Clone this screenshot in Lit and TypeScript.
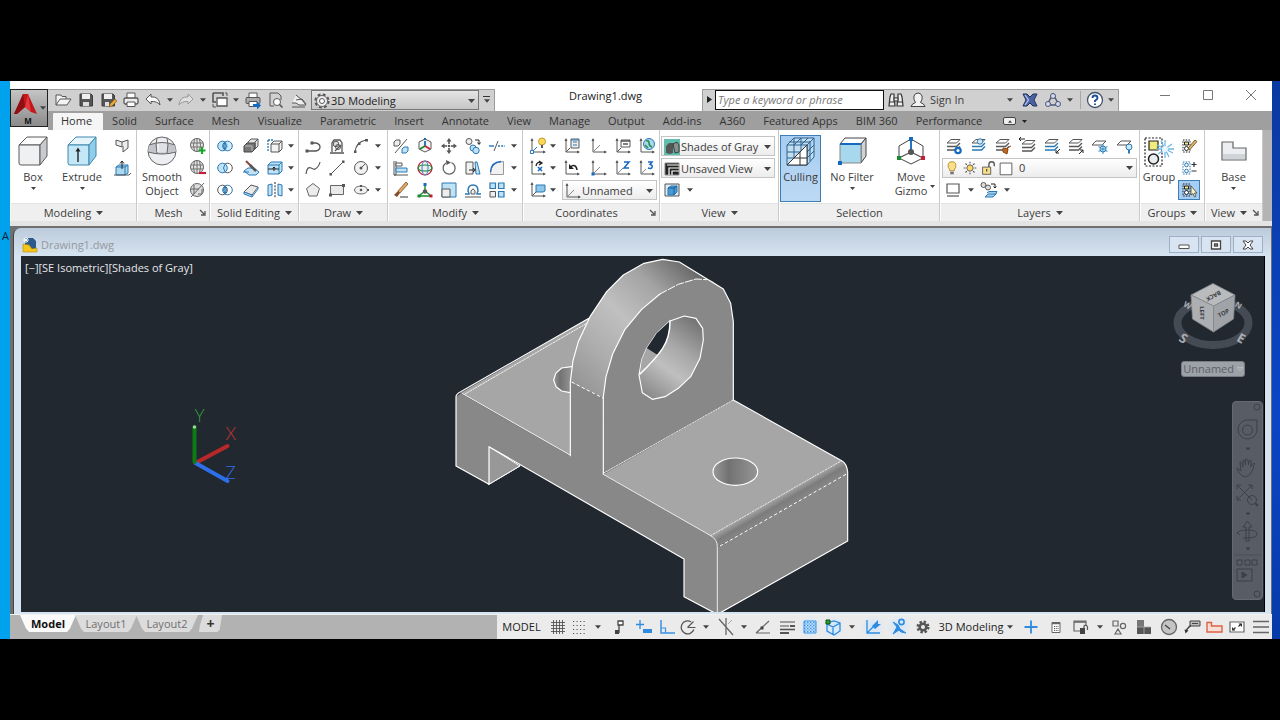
import { LitElement, html, svg, css } from "lit";
import { customElement } from "lit/decorators.js";

const K = "#565656";
const B = "#2a78b4";
const L = "#bfe3f5";

const axes = svg`<path d="M4 3v13h13" stroke=${K} fill="none"/><path d="M2.500 5L4 2l1.500 3zM15 14.500l3 1.500-3 1.500z" fill=${K}/>`;
const cubeBody = (top: string, front: string, side: string, edge: string) => svg`
  <g stroke=${edge} stroke-linejoin="round"><path d="M2 10l8-8h20l-7 8z" fill=${top}/><path d="M2 10h21v20H4q-2 0-2-2z" fill=${front}/><path d="M23 10l7-8v19l-7 9z" fill=${side}/></g>`;
const sheets = (c: string) => svg`<path d="M3 7l4-3.500h9L12.500 7z" fill="#fff" stroke=${K}/><path d="M3 10.500h9.500L16 7M3 14h9.500L16 10.500" fill="none" stroke=${c} stroke-width="1.400"/>`;
const globe = svg`<circle cx="9" cy="9" r="6.500" fill="#e4e4e4" stroke="#666"/><path d="M3 7h12M3 11h12M9 2.500v13M6.500 3q-2 6 0 12M11.500 3q2 6 0 12" fill="none" stroke="#666" stroke-width=".9"/>`;

const small: Record<string, unknown> = {
  open: svg`<path d="M3 15V5h5l1 1.500h4V9M3 15l4-6h11l-4 6z" fill="#f4f4f4" stroke=${K}/>`,
  save: svg`<path d="M4 4h11l1.500 1.500V16H4z" fill="#555" stroke="#3c3c3c"/><path d="M6 4h8v5H6z" fill="#eee"/><path d="M7 12h6v4H7z" fill="#ddd"/>`,
  saveas: svg`<path d="M3 4h11l1.500 1.500V16H3z" fill="#555" stroke="#3c3c3c"/><path d="M5 4h8v5H5z" fill="#eee"/><path d="M6 12h4v4H6z" fill="#ddd"/><path d="M10 17l1-3 5-5 2 2-5 5z" fill="#e8a53a" stroke="#8a5a18" stroke-width=".7"/>`,
  print: svg`<path d="M6 8V3h8v5" fill="#fff" stroke=${K}/><rect x="3" y="8" width="14" height="6" rx="1.500" fill="#ececec" stroke=${K} stroke-width="1.300"/><path d="M6 12h8v4.500H6z" fill="#fff" stroke=${K}/>`,
  plot: svg`<path d="M6 8V3h8v5" fill="#fff" stroke=${K}/><rect x="3" y="7.500" width="14" height="6" rx="1" fill="#aaa" stroke=${K}/><path d="M6 11.500h8v5H6z" fill="#fff" stroke=${K}/><path d="M10 14h4v-2.500l4 4-4 4V17h-4z" fill="#1769c0"/>`,
  undo: svg`<path d="M3 9l5-5v3q8-1 9 8-3-4-9-3.500V14z" fill="#fafafa" stroke=${K} stroke-linejoin="round"/>`,
  redo: svg`<path d="M17 9l-5-5v3q-8-1-9 8 3-4 9-3.500V14z" fill="#e0e0e0" stroke="#999" stroke-linejoin="round"/>`,
  sheetset: svg`<path d="M3 3h10v3M3 3v9h3" fill="none" stroke=${K} stroke-width="1.600"/><path d="M7 8h10v8H7z" fill="#fff" stroke=${K} stroke-width="1.300"/><path d="M3 14v3h3M15 3h2v3" stroke=${K} fill="none"/>`,
  preview: svg`<path d="M4 3h8l3 3v4M4 3v13h4" fill="none" stroke=${K}/><circle cx="11" cy="12" r="3.500" fill="#fff" stroke=${K}/><path d="M13.500 14.500l3 3" stroke=${K} stroke-width="1.600"/>`,
  publish: svg`<path d="M3 13h4l3 2h7l-4-5-6-5" fill="#eee" stroke=${K}/><path d="M7 10l6-1 4 5" fill="none" stroke=${K}/><path d="M3 17h13" stroke=${K}/>`,
  gear: svg`<circle cx="10" cy="10" r="6.500" fill="none" stroke="#555" stroke-width="2.200" stroke-dasharray="2.800 2.300"/><circle cx="10" cy="10" r="5.500" fill="#eee" stroke="#666"/><circle cx="10" cy="10" r="2.500" fill="#fff" stroke="#555"/>`,
  wedge: svg`<path d="M4 4l6 2v5l-6-2zM10 6l6-2v8l-5 4V10" fill="#ececec" stroke=${K}/>`,
  presspull: svg`<path d="M4 9l3-2h9v8l-3 2H4z" fill="#a9d8ef" stroke=${B}/><path d="M4 9h9v8M13 9l3-2" stroke=${B} fill="none"/><path d="M10 11V3M8 5.500L10 3l2 2.500" stroke="#222" fill="none"/><path d="M2 17h15l2-2" stroke=${K} fill="none"/>`,
  meshadd: svg`${globe}<path d="M14 11v7M10.500 14.500h7" stroke="#19a52c" stroke-width="2.200"/>`,
  meshsub: svg`${globe}<path d="M11 15h7" stroke="#c32038" stroke-width="2.200"/>`,
  meshcrease: svg`<circle cx="9" cy="10" r="6.500" fill="#ddd" stroke="#666"/><path d="M3 17L16 3M6 5v9M3 9h8M10 14h4v-5" stroke="#666" fill="none"/>`,
  union: svg`<circle cx="7.500" cy="10" r="4.800" fill=${L} stroke=${B}/><circle cx="12.500" cy="10" r="4.800" fill=${L} fill-opacity=".7" stroke=${B}/><path d="M10 6.200q3 3.800 0 7.600-3-3.800 0-7.600" fill="#6fb3dd" stroke=${B}/>`,
  subtract: svg`<circle cx="12.500" cy="10" r="4.800" fill="#fff" stroke=${K}/><circle cx="7.500" cy="10" r="4.800" fill=${L} stroke=${B}/><path d="M10 6.200q-3 3.800 0 7.600" fill="none" stroke=${B}/>`,
  intersect: svg`<circle cx="7.500" cy="10" r="4.800" fill="#fff" stroke=${K}/><circle cx="12.500" cy="10" r="4.800" fill="none" stroke=${B}/><path d="M10 6.200q3 3.800 0 7.600-3-3.800 0-7.600" fill="#6fb3dd" stroke=${B}/>`,
  thicken: svg`<path d="M7 6l3-3h7v7l-3 3H7z" fill="#e4e4e4" stroke=${K}/><path d="M14 6v7M14 6l3-3" stroke=${K}/><path d="M3 10l3-3h8v6l-3 3H3z" fill="#777" stroke="#444"/><path d="M4 10h7v5" stroke="#bbb" fill="none"/>`,
  slice: svg`<path d="M3 13l4-3h6l5 4-3 3H8z" fill=${L} stroke=${B}/><path d="M5 3l5 5" stroke="#8a4a3a" stroke-width="2"/><path d="M9 7l6 6" stroke="#555" stroke-width="2.500"/><path d="M2 14h6" stroke=${B}/>`,
  thick2: svg`<path d="M3 12l7-7 7 2-6 8z" fill="#e9e9e9" stroke=${K}/><path d="M3 12v2l8 3V15M11 17l6-8V7" fill=${L} stroke=${B}/><path d="M3 12l8 3" stroke=${B}/>`,
  interfere: svg`<path d="M6 8l3-3h8v8l-3 3H6zM6 8h8v8M14 8l3-3" fill="#f2f2f2" stroke=${K}/><path d="M3 4v12M3 4h5" stroke=${B} stroke-width="1.300" stroke-dasharray="2 1"/>`,
  extractf: svg`<path d="M3 7l3-3h11v9l-3 3H3zM3 7h11v9M14 7l3-3" fill=${L} stroke=${B}/><path d="M3 11h11M9 13V9M7.500 10.500L9 9l1.500 1.500" stroke="#222" fill="none"/>`,
  separate: svg`<path d="M3 5l4-1v11l-4 1zM17 5l-4-1v11l4 1z" fill=${L} stroke=${B}/><path d="M10 2v16" stroke="#222" stroke-dasharray="2 1.300"/>`,
  polyline: svg`<path d="M4 15h9q4-1 4-4t-4-4H9" fill="none" stroke=${K} stroke-width="1.300"/><path d="M2.500 13.500h3v3h-3zM7.500 5.500h3v3h-3z" fill=${K}/>`,
  polysolid: svg`<path d="M3 17h14M5 16V7l2-3h6l2 3v9M8 15l6-6" fill="none" stroke=${K} stroke-width="1.300"/><circle cx="9" cy="8" r="2.800" fill="#ddd" stroke=${K}/><circle cx="11" cy="11" r="2.500" fill="none" stroke=${K}/>`,
  arc: svg`<path d="M4 16Q5 6 15 4" fill="none" stroke=${K} stroke-width="1.200"/><path d="M3 14.500h2.500V17H3zM7 6.500h2.500V9H7zM14 3h3v2.500h-3z" fill=${K}/>`,
  spline: svg`<path d="M3 16q1-8 5-6t4 1q4-2 5-7" fill="none" stroke=${K} stroke-width="1.200"/>`,
  line: svg`<path d="M4 16L16 4" stroke=${K}/><path d="M2.500 15H5v2.500H2.500zM15 2.500h2.500V5H15z" fill=${K}/>`,
  circle: svg`<circle cx="10" cy="10" r="6.500" fill="#f1f1f1" stroke=${K}/><circle cx="10" cy="10" r="1.500" fill=${K}/><path d="M10 10l4-4" stroke=${K}/>`,
  polygon: svg`<path d="M10 3.500l6.500 5-2.500 7.500H6L3.500 8.500z" fill="#ececec" stroke="#666"/>`,
  rect: svg`<path d="M3.500 5.500h13v9h-13z" fill="#e9e9e9" stroke="#666"/><path d="M2 13.500h3v3H2zM15 4h3v3h-3z" fill=${K}/>`,
  ellipse: svg`<ellipse cx="10" cy="10" rx="6.500" ry="4" fill="#f1f1f1" stroke="#666"/><circle cx="10" cy="10" r="1.300" fill=${K}/><path d="M16 10h2M10 5v2" stroke=${K} stroke-width="2"/>`,
  align3: svg`<path d="M3 6l2-2h4v4L7 10H3z" fill="#eee" stroke=${K}/><path d="M11 13l2-2h4v4l-2 2h-4z" fill=${L} stroke=${B}/><path d="M4 17L16 3" stroke=${K}/>`,
  move3: svg`<path d="M10 3l6 3v7l-6 3-6-3V6z" fill="#f4f4f4" stroke=${K}/><path d="M10 10V5" stroke="#1769c0" stroke-width="1.800"/><path d="M10 10l-5 3" stroke="#168a2c" stroke-width="1.800"/><path d="M10 10l5 3" stroke="#c32038" stroke-width="1.800"/><path d="M9 2h2v2H9z" fill="#1769c0"/>`,
  move: svg`<path d="M10 4v4M10 12v4M4 10h4M12 10h4" stroke=${K} stroke-width="1.600"/><path d="M7.500 5.500L10 2l2.500 3.500zM7.500 14.500L10 18l2.500-3.500zM5.500 7.500L2 10l3.500 2.500zM14.500 7.500L18 10l-3.500 2.500z" fill=${K}/><circle cx="10" cy="10" r="1.300" fill=${K}/>`,
  copy: svg`<circle cx="6" cy="5.500" r="3" fill="#eee" stroke=${K}/><circle cx="10" cy="12" r="3" fill=${L} stroke=${B}/><circle cx="13" cy="14.500" r="3.200" fill=${L} stroke=${B}/><path d="M12 4h4v4M14.500 6.500L16 8.500l1.500-2" fill="none" stroke="#222"/>`,
  trim: svg`<path d="M2 10h5" stroke="#1769c0" stroke-width="1.300"/><path d="M11 10h7" stroke=${B} stroke-dasharray="2 1.200" stroke-width="1.300"/><path d="M7 15l4-10" stroke=${K}/>`,
  align: svg`<path d="M3 3v14h2V3M3 17h14" fill="none" stroke=${K}/><path d="M5 5h6v3H5z" fill="#fff" stroke=${K}/><path d="M5 10h11v4H5z" fill=${L} stroke=${B}/>`,
  rotate3: svg`<circle cx="10" cy="10" r="7" fill="#eee" stroke="#c32038" stroke-width="1.200"/><ellipse cx="10" cy="10" rx="7" ry="3" fill="none" stroke="#168a2c" stroke-width="1.100"/><ellipse cx="10" cy="10" rx="3" ry="7" fill="none" stroke="#4a86c0" stroke-width="1.100"/>`,
  rotate: svg`<path d="M7 5A6 6 0 1 0 12.500 4.600" fill="none" stroke="#666" stroke-width="1.300"/><path d="M7 2l5 2.500L7.500 7z" fill=${K}/>`,
  mirror: svg`<path d="M3 4h7v12H3z" fill="#f1f1f1" stroke=${K}/><path d="M12 4h2l3 12h-4z" fill=${L} stroke=${B}/><path d="M6 12h6M10 10l2.500 2-2.500 2" fill="none" stroke="#222"/>`,
  fillet: svg`<path d="M3.500 16.500Q3 4 16.500 3.500v13z" fill="#f1f1f1" stroke="#999"/><path d="M3.500 14Q4 4 14 3.500" fill="none" stroke="#1769c0" stroke-width="1.300"/>`,
  erase: svg`<path d="M7 11l8-9 2 2-8 9z" fill="#e0a868" stroke="#7a5022" stroke-width=".8"/><path d="M3 15l4-4 2 2-3 4z" fill="#8a4a28"/><path d="M9 17h8" stroke="#333"/>`,
  scale3: svg`<path d="M10 5v6M10 11l-5 4M10 11l5 4M4 16h12" stroke="#168a2c" stroke-width="1.400" fill="none"/><circle cx="10" cy="11.500" r="2.200" fill=${K}/><path d="M8.500 3h3v3h-3z" fill="#1769c0"/><path d="M2.500 14.500h3v3h-3z" fill="#168a2c"/><path d="M14.500 14.500h3v3h-3z" fill="#c32038"/>`,
  scale: svg`<path d="M3 3h14v14H3z" fill=${L} stroke=${B}/><path d="M3 9h8v8H3z" fill="#eee" stroke=${K}/>`,
  offset: svg`<path d="M2 14h4q0-1-1-3 0-6 5-6t5 6q-1 2-1 3h4" fill="none" stroke=${B} stroke-width="1.500"/><path d="M2 17h16M8 14V11q2-4 4 0v3z" stroke=${K} fill="#eee"/>`,
  array: svg`<g fill=${L} stroke=${B} stroke-width="1.200"><path d="M3 3h5.500v5.500H3zM11.500 3H17v5.500h-5.500zM11.500 11.500H17V17h-5.500z"/></g><path d="M3 11.500h5.500V17H3z" fill="#eee" stroke=${K}/>`,
  ucsidea: svg`${axes}<path d="M4 16l5-5" stroke=${B}/><circle cx="14" cy="5.500" r="3.500" fill="#fbd75b" stroke="#c7952b"/><path d="M13 9h2v3h-2z" fill=${K}/><path d="M2.500 14.500h3v3h-3z" fill="#fff" stroke=${B}/>`,
  ucsx: svg`${axes}<path d="M8 8q1-5 5-3M11 3l3 2-3 2" fill="none" stroke="#222" stroke-width="1.300"/><path d="M10 9l4 4M14 9l-4 4" stroke="#1769c0" stroke-width="1.600"/>`,
  ucsview: svg`${axes}<path d="M8 5h9v6l-2 1H8z" fill="#8fc7ea" stroke=${B}/><path d="M4 16l4-4" stroke=${K}/>`,
  ucsnamed: svg`${axes}<path d="M9 3h8v9H9z" fill="#eee" stroke=${K}/><path d="M11 6h4M11 9h4M9 4h8" stroke=${B} stroke-width="1.200"/><path d="M4 16l4-4" stroke=${K}/>`,
  ucsworld: svg`${axes}<path d="M4 16l7-7" stroke="#888"/>`,
  ucslist: svg`${axes}<path d="M8 4h9v7H8z" fill="#fff" stroke=${K}/><path d="M8 5h9M10 8h5" stroke=${K} stroke-width="1.600"/><path d="M4 16l4-4" stroke=${K}/>`,
  ucsglobe: svg`${axes}<circle cx="12" cy="8" r="5.500" fill="#a7d9ea" stroke=${B}/><path d="M9 5q3-1 3 2t3 4M8 9l3 3" stroke="#2f8a58" stroke-width="1.600" fill="none"/>`,
  ucsprev: svg`${axes}<path d="M8 9q6-4 7 3" fill="none" stroke="#222" stroke-width="1.500"/><path d="M7 6v5h5z" fill="#222"/>`,
  ucsorigin: svg`${axes}<path d="M4 16l7-7" stroke="#888"/><path d="M2.500 14.500h3v3h-3z" fill="#1769c0"/>`,
  ucsz: svg`${axes}<path d="M4 16l6-6" stroke="#888"/><path d="M11 4h5l-5 6h5" fill="none" stroke="#1769c0" stroke-width="1.500"/>`,
  ucs3: svg`${axes}<path d="M4 16l5-5" stroke="#888"/><path d="M11 4h4l-2 2.500q3 .5 2 3-1 1.500-4 .5" fill="none" stroke="#1769c0" stroke-width="1.500"/>`,
  shades: svg`<path d="M2 2h16v16H2z" fill="#5fbfae"/><path d="M4 9l3-3h4v10l-3 1-4-1z" fill="#555"/><path d="M11 7l4-2 2 3v7l-4 1z" fill="#8a8f8e" stroke="#3c3c3c"/>`,
  unsaved: svg`<path d="M3 4h14v12H3z" fill="#222" stroke="#888"/><path d="M7 16V9h10M10 16v-4h7M5 6h12" stroke="#fff" fill="none" stroke-width="1.200"/>`,
  viewbox: svg`<path d="M3 4h14v12H3z" fill="#dcebf6" stroke="#555"/><path d="M6 8l3-2h6v6l-3 3H6z" fill="#4a9ad4" stroke=${B}/><path d="M6 8h6v7M12 8l3-2" stroke="#1c5f96" fill="none"/>`,
  lprops: svg`${sheets(K)}<circle cx="14" cy="14.500" r="2.700" fill="#fff" stroke="#1769c0" stroke-width="2.200"/>`,
  lcur: svg`<g>${sheets(B)}</g><circle cx="11" cy="5.500" r="2.700" fill="#d5e9f5" stroke=${B}/>`,
  lmatch: svg`${sheets(K)}<path d="M10 12l5 1-1 5-4-2zM14 12l4-2" fill="#c0691f" stroke="#8a4a18"/>`,
  lprev: svg`<g transform="translate(2 1)">${sheets(K)}</g><path d="M8 3H2M4 1L2 3l2 2" stroke="#222" fill="none"/>`,
  liso: svg`${sheets(B)}<path d="M18 13l-4 4M14 14v3h3" stroke="#222" fill="none"/>`,
  luniso: svg`${sheets(K)}<path d="M13 18l4-4M14 14h3v3" stroke="#222" fill="none"/>`,
  lfreeze: svg`<path d="M2 9l4-4h10l-4 4z" fill="#fff" stroke=${K}/><path d="M13 8v10M8.500 10.500l9 5M17.500 10.500l-9 5" stroke="#4f9fce" stroke-width="1.100"/><circle cx="13" cy="13" r="3" fill="none" stroke=${B}/>`,
  loff: svg`<path d="M2 9l4-4h10l-4 4z" fill="#fff" stroke=${K}/><circle cx="14" cy="11" r="3" fill="#cfe6f4" stroke=${B}/><path d="M13 14h2v3.500h-2z" fill=${B}/>`,
  bulb: svg`<path d="M7.500 13q0-2-1.500-3.500Q4.500 3 10 3t4 6.500Q12.500 11 12.500 13z" fill="#fbe08a" stroke="#b98a2a"/><path d="M8 14h4v3H8z" fill="#777"/>`,
  sun: svg`<circle cx="10" cy="10" r="3.500" fill="#fbd768" stroke=${K}/><path d="M10 3v2M10 15v2M3 10h2M15 10h2M5 5l1.500 1.500M13.500 13.500L15 15M15 5l-1.500 1.500M5 15l1.500-1.500" stroke=${K} stroke-width="1.200"/>`,
  unlock: svg`<path d="M11 9V6q0-3 3-3t3 3v2" fill="none" stroke=${K} stroke-width="1.500"/><path d="M4 9h9v8H4z" fill="#fbe08a" stroke=${K}/><path d="M8.500 11v3" stroke=${K} stroke-width="1.500"/>`,
  swatch: svg`<path d="M3.500 4.500h13v13h-13z" fill="#fff" stroke=${K}/>`,
  lstate: svg`<path d="M4 4h12v9H4z" fill="#fff" stroke=${K} stroke-width="1.200"/><path d="M4 16h12" stroke=${K} stroke-width="1.200"/>`,
  lcopy: svg`<circle cx="4.500" cy="5" r="2.500" fill="#ddd" stroke=${K}/><circle cx="9" cy="7.500" r="2.500" fill="#ddd" stroke=${K}/><path d="M12 4h4v4M14.500 6.500L16 8l1.500-1.500" fill="none" stroke="#222"/><path d="M6 17l3-3h8l-3 3zM8 13l2-1.500h8l-1 2.500" fill="#9ccdea" stroke=${B}/>`,
  gedit: svg`<path d="M4 4h7v12H4z" fill="none" stroke="#222" stroke-dasharray="1.500 1.200"/><path d="M5.500 6h4v3h-4z" fill="#f4ea8a" stroke="#222"/><circle cx="7.500" cy="12.500" r="2" fill="#fff" stroke="#222"/><path d="M9 12l7-8 2 1.500-7 8z" fill="#d9b36a" stroke="#6b4a1c" stroke-width=".8"/>`,
  gadd: svg`<path d="M4 4h7v12H4z" fill="none" stroke="#2a78b4" stroke-dasharray="1.500 1.200"/><circle cx="7.500" cy="7" r="1.800" fill="none" stroke=${B}/><circle cx="7.500" cy="13" r="1.800" fill="none" stroke=${B}/><path d="M15 4v5M12.500 6.500h5M12.500 13h5" stroke="#333" stroke-width="1.200"/>`,
  gsel: svg`<path d="M4 4h7v12H4z" fill="none" stroke="#222" stroke-dasharray="1.500 1.200"/><path d="M5.500 6h4v3h-4z" fill="#f4ea8a" stroke="#222"/><circle cx="7.500" cy="12.500" r="2" fill="#fff" stroke="#222"/><path d="M12 6v9l2-1.500 1.500 3.500 1.500-1-1.500-3h2.500z" fill="#f7f4c2" stroke="#444" stroke-width=".8"/>`,
  binoc: svg`<g fill="#f0f0f0" stroke="#333" stroke-width="1.200"><path d="M5 4h3v3l1 9H3l1-9zM12 4h3l1 3 1 9h-6l1-9z"/><path d="M8 8h4v3H8z"/></g><path d="M3.500 12h5M11.500 12h5" stroke="#333"/>`,
  user: svg`<path d="M3 16.500q1-3 4.500-4Q5 9 6 6q1-3 4-3t4 3q1 3-1.500 6.500 3.500 1 4.500 4z" fill="#f2f2f2" stroke="#444"/>`,
  exchange: svg`<path d="M3 4h4l3 3 3-3h4l-3 6 3 6h-4l-3-3-3 3H3l3-6z" fill="#4a62a4" stroke="#22305c"/><path d="M5 5l3.500 5L5 15" stroke="#b9c6ea" stroke-width="1.300" fill="none"/>`,
  tri: svg`<path d="M10 4l6 11H4z" fill="none" stroke="#4a5578" stroke-width="1.500"/><circle cx="10" cy="6" r="2.500" fill="#d5daea" stroke="#4a5578"/><circle cx="5" cy="14" r="2.500" fill="#d5daea" stroke="#4a5578"/><circle cx="15" cy="14" r="2.500" fill="#d5daea" stroke="#4a5578"/>`,
  help: svg`<circle cx="10" cy="10" r="7.500" fill="#fff" stroke="#44536e" stroke-width="1.300"/><path d="M7.500 8q0-2.500 2.500-2.500T12.500 8Q12.500 9 10 10.800V12M10 13.500v1.500" fill="none" stroke="#1c4fa0" stroke-width="1.900"/>`,
  grid: svg`<path d="M5.500 3v14M8.500 3v14M11.500 3v14M14.500 3v14M3 5.500h14M3 8.500h14M3 11.500h14M3 14.500h14" stroke="#555" stroke-width=".9"/>`,
  snap: svg`<path d="M3 4.500h14M3 8.500h14M3 12.500h14M3 16.500h14" stroke="#555" stroke-dasharray="1.200 2.300"/>`,
  infer: svg`<path d="M9 4h5v4H9z" fill="#fff" stroke="#444" stroke-width="1.300"/><path d="M10 8v8" stroke="#444" stroke-width="1.300"/><path d="M6 13h4v4H6z" fill="#444"/>`,
  dyn: svg`<path d="M6 3v9M2 7.500h8" stroke="#2e8be0" stroke-width="1.300"/><path d="M9 12h9v4H9z" fill="#2e8be0"/>`,
  ortho: svg`<path d="M4 3v13h14" fill="none" stroke="#3a93e4" stroke-width="1.500"/><path d="M4 11h4.500v5" fill="none" stroke="#3a93e4" stroke-width="1.200"/>`,
  polar: svg`<path d="M15.800 12.500A6.500 6.500 0 1 1 13 4.800" fill="none" stroke="#555" stroke-width="1.300"/><path d="M9.500 10.500h8M9.500 10.500l6-6" stroke="#555" stroke-width="1.200"/>`,
  iso: svg`<path d="M3 2l14 16M10 1v17" stroke="#666" stroke-width="1.300"/><path d="M12 7l4-4" stroke="#aaa"/>`,
  otrack: svg`<path d="M3 16h14M3 16L16 4" stroke="#666" stroke-width="1.200"/><path d="M7.500 9.500h3v3h-3z" fill="#444"/>`,
  lwt: svg`<path d="M3 5h15M3 9h9" stroke="#555" stroke-width="1.200"/><path d="M3 12.500h15" stroke="#555" stroke-width="1.600"/><path d="M3 16h9M13 9h5" stroke="#555" stroke-width="2"/>`,
  transp: svg`<path d="M4 4h12v12H4z" fill="#cfe6fb" stroke="#3a93e4"/><path d="M4 5.500h12M4 8.500h12M4 11.500h12M4 14.500h12" stroke="#3a93e4" stroke-width="1.500" stroke-dasharray="1.500 1.500"/><path d="M5.500 7h11M5.500 10h11M5.500 13h11" stroke="#3a93e4" stroke-dasharray="1.500 1.500"/>`,
  osnap3: svg`<path d="M4 6l7-2 6 2v8l-6 4-7-4zM4 7l6 3 7-4M10 10v7" fill="#d6eafb" stroke="#2e8be0" stroke-width="1.300"/><path d="M3 3h4v4H3z" fill="#29a329" stroke="#134d13"/>`,
  dynucs: svg`<path d="M4 3v13h13M4 16L14 6" fill="none" stroke="#2e8be0" stroke-width="1.300"/><path d="M9 9l6-6v4h3l-6 5z" fill="#2e8be0"/>`,
  gizmo: svg`<circle cx="12.500" cy="5" r="2.600" fill="none" stroke="#2e8be0" stroke-width="1.600"/><path d="M4 5l5 3 2 4 6 4-5-1-2-2-6 4 4-7z" fill="#2e8be0" stroke="#2e8be0"/>`,
  cog: svg`<circle cx="10" cy="10" r="5" fill="none" stroke="#555" stroke-width="3" stroke-dasharray="2.200 1.730"/><circle cx="10" cy="10" r="3.300" fill="none" stroke="#555" stroke-width="2.600"/>`,
  plus: svg`<path d="M10 3.500v13M3.500 10h13" stroke="#2e8be0" stroke-width="1.800"/>`,
  calc: svg`<path d="M6 5.500h8v10H6z" fill="#fff" stroke="#666"/><path d="M6 6.500h8" stroke="#666" stroke-width="1.500"/><path d="M8 9.500h4.500M8 11.500h4.500M8 13.500h4.500" stroke="#555" stroke-dasharray="1 .8"/>`,
  uilock: svg`<path d="M9 14H3V4h12v4" fill="none" stroke="#666" stroke-width="1.200"/><path d="M3 5h12" stroke="#666" stroke-width="1.600"/><path d="M9 11h5v6H9z" fill="#444"/><path d="M13 11V9q2.500-2 3.500 1v3" fill="none" stroke="#555" stroke-width="1.200"/>`,
  shapes: svg`<path d="M4 4h5v5H4zM9 12l3 5H6z" fill="none" stroke="#666" stroke-width="1.200"/><circle cx="14" cy="9" r="2.600" fill="none" stroke="#666" stroke-width="1.200"/>`,
  hw: svg`<path d="M3 3h7v7H3z" fill="#777"/><path d="M3 10h7v7H3zM10 10h7v7h-7z" fill="#555"/><path d="M3 10h14M10 10v7" stroke="#aaa" stroke-width=".8"/>`,
  clean: svg`<circle cx="10" cy="10" r="7.500" fill="#c4c4c4" stroke="#666" stroke-width="1.300"/><path d="M6 8l5 4" stroke="#444" stroke-width="1.500"/>`,
  conn: svg`<path d="M7 4h10v5H7z" fill="#bbb" stroke="#444"/><path d="M9 6.500h6" stroke="#444"/><path d="M8 9q-2 0-5 5" fill="none" stroke="#444" stroke-width="1.500"/><path d="M1.500 12.500l4 1-3 3z" fill="#333"/>`,
  folder: svg`<path d="M3 5.500h4.500v3.500H18v6H3z" fill="#f7ded6" stroke="#dd6244" stroke-width="1.400"/>`,
  full: svg`<path d="M3 5h14v10H3z" fill="#fff" stroke="#666" stroke-width="1.200"/><path d="M11.500 9.500L14 7M6 13l2.500-2.500" stroke="#333" stroke-width="1.200"/><path d="M11.500 6.500h3.500v3.500zM5 10v3.500h3.500z" fill="#333"/>`,
  menu: svg`<path d="M2 4.500h16M2 10h16M2 15.500h16" stroke="#666" stroke-width="1.600"/>`,
};

const large: Record<string, unknown> = {
  box: cubeBody("#fbfbfc", "#eff0f2", "#c9cacf", "#5a5a5a"),
  extrude: svg`${cubeBody("#e6f5fc", "#c3e7f7", "#8fcde9", "#3e88ad")}<path d="M12 27V15" stroke="#222" stroke-width="1.400"/><path d="M9.500 16.500l2.500-4 2.500 4z" fill="#222"/>`,
  smooth: svg`<circle cx="16" cy="16" r="14" fill="#eceef1" stroke="#666"/><path d="M3 10q13-5 26 0l1 7q-14 4-28 0z" fill="#c3c5cb"/><path d="M11 8h10v9.500H11z" fill="#dfe1e6"/><path d="M11 3q-2 6 0 15M21 3q2 6 0 15M3 10q13-5 26 0M2 17q14 4 28 0" fill="none" stroke="#666"/><path d="M12 9v8" stroke="#fff"/>`,
  culling: svg`<g fill="none" stroke="#2a628f"><path d="M2 9h20v20H2zM2 9l7-7h20l-7 7M29 2v19l-7 8" fill="#c4def2"/><path d="M9 9v20M16 9v20M2 16h20M2 22h20M9 9l7-7M16 9l7-7M4 6h21M25 5v20M22 16l7-7M22 22l7-7M9 2v7M16 2v7"/></g><path d="M22 9v20H2z" fill="#fff" stroke="#333"/><path d="M15 16v13M9 22h13" stroke="#333"/>`,
  filter: svg`<path d="M4 9l5-6h21l-5 6z" fill="#fff" stroke="#444"/><path d="M25 9l5-6v18l-5 7z" fill="#d0d3d6" stroke="#444"/><path d="M4 9h21v19H4z" fill="#a8d8ee" stroke="#888"/><path d="M4 9h21" stroke="#1769c0" stroke-width="2"/><path d="M2 26h4v4H2z" fill="#1769c0"/>`,
  gizmo: svg`<path d="M16 4l12 7v12l-12 6-12-6V11z" fill="#fff" stroke="#444"/><path d="M16 17V4" stroke="#2475c8" stroke-width="2"/><path d="M16 17L4 23" stroke="#555" stroke-width="1.300"/><path d="M16 17l12 6" stroke="#555" stroke-width="1.300"/><circle cx="16" cy="17" r="3" fill="#555"/><path d="M14 2h4v4h-4z" fill="#1769c0"/><path d="M2 21h4v4H2z" fill="#168a2c"/><path d="M26 21h4v4h-4z" fill="#c32038"/>`,
  group: svg`<path d="M2 3h17v28H2z" fill="none" stroke="#222" stroke-dasharray="2 1.500" stroke-width="1.200"/><path d="M6 6h9v9H6z" fill="#f3ea7c" stroke="#222" stroke-width="1.200"/><circle cx="10.500" cy="24" r="5" fill="#e8eef2" stroke="#222" stroke-width="1.500"/><path d="M22 5v18M14 10l16 8M15 19l14-10M18 6l8 16M13 14h18" stroke="#6fb9e4" stroke-width="1.300"/><circle cx="22" cy="14" r="3" fill="#e8f6ff"/>`,
  base: svg`<path d="M4 7h11v6h13v12H4z" fill="#eceef1" stroke="#666" stroke-width="1.200"/><path d="M5 21.500h22" stroke="#d0d3d8" stroke-width="5"/>`,
};

const ic = (n: string) => html`<svg class="i20" viewBox="0 0 20 20" aria-hidden="true">${small[n]}</svg>`;
const big = (n: string) => html`<svg class="i32" viewBox="0 0 32 32" aria-hidden="true">${large[n]}</svg>`;
const tri = () => html`<svg class="tri" viewBox="0 0 7 4" aria-hidden="true"><path d="M0 0h7L3.500 4z"/></svg>`;
const btn = (n: string, cls = "") => html`<button class="ib ${cls}" aria-label=${n}>${ic(n)}</button>`;
const drop = (label: string, cls = "") => html`<button class="ib ${cls}" aria-label="${label} options">${tri()}</button>`;
const launcher = () => html`<button class="launch" aria-label="Dialog"><svg viewBox="0 0 7 7"><path d="M1 1l4 4M6 2v4H2" fill="none" stroke="#555" stroke-width="1.300"/></svg></button>`;

const combo = (cls: string, label: string, value: string, icon: string) => html`
  <label class="combo ${cls}">
    ${ic(icon)}
    <select aria-label=${label}><option>${value}</option></select>
    ${tri()}
  </label>`;

const panel = (title: string, body: unknown, opts: { menu?: boolean; launch?: boolean; cls?: string } = {}) => html`
  <section class="panel ${opts.cls ?? ""}">
    <div class="body">${body}</div>
    <footer>
      <button class="ptitle">${title}${opts.menu ? tri() : ""}</button>
      ${opts.launch ? launcher() : ""}
    </footer>
  </section>`;

const bigBtn = (icon: string, label: unknown, arrow = true, cls = "") => html`
  <button class="big ${cls}">${big(icon)}<span>${label}</span>${arrow ? tri() : ""}</button>`;

const TABS = ["Home", "Solid", "Surface", "Mesh", "Visualize", "Parametric", "Insert", "Annotate", "View", "Manage", "Output", "Add-ins", "A360", "Featured Apps", "BIM 360", "Performance"];

const STATUS_A: [string, string][] = [
  ["grid", "w24"], ["snap", "w20"], ["", "w16"], ["infer", "w26"], ["dyn", "w24"], ["ortho", "w22"], ["polar", "w20"], ["", "w16"],
  ["iso", "w24"], ["", "w12"], ["otrack", "w26"], ["lwt", "w22"], ["transp", "w24 on"], ["osnap3", "w22 on"], ["", "w16"],
  ["dynucs", "w26 on"], ["gizmo", "w26 on"], ["cog", "w22"],
];
const STATUS_B: [string, string][] = [
  ["plus", "w26"], ["calc", "w24"], ["uilock", "w26"], ["", "w12"], ["shapes", "w26"], ["hw", "w24"], ["clean", "w26"],
  ["conn", "w22"], ["folder", "w20"], ["full", "w26"], ["menu", "w22"],
];
const status = (items: [string, string][]) => items.map(([n, c]) => (n ? btn(n, c) : drop("Setting", c)));

@customElement("app-root")
export class AppRoot extends LitElement {
  static styles = css`
    :host { display: flex; flex-direction: column; min-height: 100vh; box-sizing: border-box; padding: 81px 0; background: #000; color: #3c3c3c; font: 11px/14px "Open Sans", "Noto Sans", sans-serif; }
    * { box-sizing: border-box; }
    button, input, select { font: inherit; color: inherit; margin: 0; padding: 0; border: 0; background: none; }
    svg { display: block; flex: none; }
    .i20 { width: 20px; height: 20px; }
    .i32 { width: 32px; height: 32px; }
    .tri { width: 6px; height: 4px; fill: #444; }
    .ib { display: flex; align-items: center; justify-content: center; flex: none; height: 20px; width: 22px; }

    .desktop { flex: 1; display: grid; grid-template-columns: 10px minmax(0, 1fr) 8px; }
    .left { background: #00a2ee; overflow: hidden; color: #10222c; padding: 148px 0 0 2px; }
    .right { background: linear-gradient(#0a3aa0, #0b45c6 60%, #073aa8); }
    .app { display: flex; flex-direction: column; min-width: 0; background: #fff; }

    .header { display: grid; grid-template-columns: 38px minmax(0, 1fr); grid-template-rows: 22px 19px; padding-top: 8px; }
    .appbtn { grid-row: 1 / 3; display: flex; align-items: center; justify-content: center; background: linear-gradient(#c4c4c4, #8b8b8b); border: 1px solid #222; gap: 2px; margin-bottom: 3px; }
    .appbtn .logo { width: 26px; height: 34px; }
    .titlebar { display: flex; align-items: stretch; min-width: 0; }
    .qat, .info { display: flex; align-items: center; background: #d0d0d0; border: 1px solid #9c9c9c; border-width: 1px 1px 0 0; flex: none; padding-bottom: 2px; }
    .qat { padding-left: 4px; }
    .info { border-left-width: 1px; width: 417px; }
    .combo { display: grid; align-items: center; grid-template-columns: 20px 1fr 14px; height: 20px; border: 1px solid #c4c4c4; background: linear-gradient(#fff, #ececec); }
    .combo > .i20 { grid-area: 1 / 1; pointer-events: none; }
    .combo > .tri { grid-area: 1 / 3; width: 7px; pointer-events: none; justify-self: end; margin-right: 3px; }
    .combo select { grid-area: 1 / 1 / 2 / 4; width: 100%; height: 100%; appearance: none; padding-left: 19px; outline: none; }
    .combo.ws { width: 168px; margin-left: 1px; border-color: #777; background: linear-gradient(#e4e4e4, #c6c6c6); color: #222; }
    .more { width: 15px; height: 20px; display: grid; place-content: center; justify-items: center; gap: 2px; }
    .more i { width: 7px; height: 1px; background: #333; }
    .doc { flex: 1; margin: 0; padding: 0 0 0 14px; text-align: center; font-weight: 400; font-size: 11px; color: #222; }
    .info .exp { width: 12px; flex: none; display: grid; place-content: center; }
    .info .exp svg { width: 5px; height: 7px; }
    .info input { width: 169px; flex: none; height: 20px; border: 1px solid #111; background: #fff; padding: 0 2px; font-style: italic; }
    .info input::placeholder { color: #777; opacity: 1; }
    .signin { display: flex; align-items: center; width: 94px; flex: none; gap: 2px; }
    .sep { width: 1px; height: 18px; background: #a8a8a8; margin: 0 4px; flex: none; }
    .winctl { display: flex; width: 153px; justify-content: flex-end; flex: none; margin-top: -4px; }
    .winctl button { width: 43px; display: grid; place-content: center; height: 20px; }
    .winctl svg { width: 12px; height: 12px; }
    .tabs { display: flex; align-items: stretch; background: #9f9f9f; padding-left: 5px; min-width: 0; overflow: hidden; }
    .tab { padding: 1px 9px 0; white-space: nowrap; color: #333; }
    .tab.sel { background: #f5f5f5; margin-top: 2px; padding: 0 11px 1px 8px; border-radius: 1px 1px 0 0; }
    .pill { width: 13px; height: 8px; border: 1px solid #444; border-radius: 2px; background: #eee; display: grid; place-content: center; margin: 6px 6px 0 12px; }
    .pill .tri { width: 4px; height: 3px; transform: rotate(180deg); }
    .tabs > .tri { margin-top: 9px; width: 5px; height: 3px; fill: #222; }

    .ribbon { display: grid; grid-template-columns: 127fr 73fr 89fr 89fr 135fr 137fr 119fr 161fr 200fr 65fr 58fr 9px; height: 91px; background: #f5f5f5; }
    .panel { display: flex; flex-direction: column; min-width: 0; border-right: 1px solid #c9c9c9; background: #fff; }
    .panel .body { flex: 1; padding-top: 5px; display: grid; align-content: start; grid-auto-rows: 22px; align-items: center; }
    .panel footer { display: flex; align-items: center; height: 18px; background: #efefef; border-top: 1px solid #e2e2e2; margin-left: 1px; }
    .ptitle { flex: 1; display: flex; align-items: center; justify-content: center; gap: 5px; white-space: nowrap; }
    .ptitle .tri { width: 7px; }
    .launch { width: 10px; } .launch svg { width: 7px; height: 7px; }
    .stub { background: #b4b4b4; }
    .big { grid-row: 1 / 4; align-self: start; display: flex; flex-direction: column; align-items: center; gap: 3px; height: 67px; white-space: nowrap; }
    .big span { min-height: 14px; }
    .big .tri { width: 5px; height: 3px; }
    .big.on { background: linear-gradient(#a8cdf0, #bcd9f4); border: 1px solid #3d7cb5; gap: 2px; }
    .side { position: relative; }
    .side .tri { position: absolute; right: 4px; bottom: 14px; }
    .modeling .body { grid-template-columns: 46px 52px 1fr; }
    .mesh .body { grid-template-columns: 50px 1fr; }
    .solid .body { grid-template-columns: 26px 26px 22px 10px; padding-left: 2px; }
    .draw .body { grid-template-columns: 24px 24px 24px 10px; padding-left: 2px; }
    .modify .body { grid-template-columns: repeat(5, 24px) 10px; padding-left: 1px; }
    .coords .body { grid-template-columns: 22px 8px 30px repeat(3, 24px); padding-left: 4px; }
    .body .ib { width: 100%; }
    .coords .combo { grid-column: 3 / 7; margin: 0 2px 0 5px; }
    .views .body { grid-template-columns: 22px 14px 1fr; padding-left: 1px; }
    .views .combo { grid-column: 1 / 4; margin-right: 3px; }
    .sel .body { grid-template-columns: 41px 62px 1fr; padding-left: 1px; }
    .layers .body { grid-template-columns: repeat(8, 1fr); padding: 5px 2px 0; }
    .layerrow { grid-column: 1 / 9; display: flex; align-items: center; height: 20px; border: 1px solid #c4c4c4; background: linear-gradient(#fff, #ececec); }
    .layerrow .i20 { width: 18px; height: 18px; }
    .layerrow .combo { flex: 1; grid-template-columns: 1fr 14px; border: 0; height: 18px; background: none; }
    .layerrow .combo .tri { grid-area: 1 / 2; }
    .layerrow .combo select { grid-area: 1 / 1 / 2 / 3; padding-left: 4px; }
    .layertools { grid-column: 1 / 9; display: flex; }
    .groups .body { grid-template-columns: 38px 22px; }
    .groups .on { background: #a6cdf2; border: 1px solid #3d7cb5; }
    .base .body { grid-template-columns: 1fr; }

    .ib.w12 { width: 12px; } .ib.w14 { width: 14px; } .ib.w16 { width: 16px; } .ib.w20 { width: 20px; } .ib.w22 { width: 22px; } .ib.w24 { width: 24px; } .ib.w26 { width: 26px; }

    .mdi { flex: 1; display: flex; flex-direction: column; min-height: 0; border-top: 5px solid #e4e4e4; background: #6f6f6f; padding: 2px 1px 0 3px; }
    .child { flex: 1; display: flex; flex-direction: column; min-height: 0; padding: 0 6px 2px 7px; border-radius: 7px 0 0 0; border-left: 1px solid #444; background: linear-gradient(#bccbdb, #d6e3f0 28px); }
    .ctitle { display: flex; align-items: center; height: 28px; color: #94999e; padding-top: 5px; }
    .ctitle h2 { margin: 0; flex: 1; font-size: 11px; font-weight: 400; }
    .ctitle button { width: 30px; height: 17px; border: 1px solid #9fb0c6; background: #d8e4f1; display: grid; place-content: center; }
    .ctitle button svg { width: 14px; height: 12px; }
    .ctitle .ctl { display: flex; gap: 2px; margin-right: 2px; }
    .canvas { flex: 1; position: relative; min-height: 356px; background: #222830; overflow: hidden; color: #e4e7ea; border-right: 1px solid #000; }
    .scene { position: absolute; inset: 0; width: 100%; height: 100%; }
    .vlabel { position: absolute; left: 4px; top: 5px; }
    .ucsname { position: absolute; right: 19px; top: 105px; width: 64px; height: 16px; border: 1px solid #777c84; border-radius: 3px; background: #9da1a8; color: #5c6068; display: flex; align-items: center; justify-content: space-around; line-height: 12px; }
    .ucsname .tri { fill: none; stroke: #c3c6cb; }
    .nav { position: absolute; right: 1px; top: 145px; width: 31px; height: 199px; border-radius: 4px; background: #575c65; border: 1px solid #646973; }
    .nav svg { width: 29px; height: 197px; }

    .bottom { display: flex; align-items: stretch; height: 25px; background: #b2b2b2; border-top: 1px solid #f2f2f2; flex: none; }
    .sheets { flex: 1; display: flex; align-items: flex-start; padding-left: 10px; color: #707070; }
    .sheets button { height: 17px; width: 62px; margin-right: -1px; background: #dcdcdc; clip-path: polygon(0 0, 100% 0, calc(100% - 6px) 80%, calc(100% - 9px) 100%, 9px 100%, 6px 80%); line-height: 17px; }
    .sheets .cur { width: 56px; background: #fafafa; font-weight: 700; color: #111; }
    .sheets .add { width: 23px; margin-left: 2px; color: #333; font-weight: 700; font-size: 14px; clip-path: polygon(18% 0, 100% 0, 90% 85%, 80% 100%, 0 100%, 4% 60%); }
    .status { display: flex; align-items: center; background: #ebebeb; color: #222; flex: none; }
    .status .ib { height: 24px; }
    .status .on { background: radial-gradient(#cfe5fa, #ebebeb 70%); }
    .model { width: 49px; text-align: center; height: 24px; }
    .ws2 { width: 84px; height: 24px; display: flex; align-items: center; justify-content: center; gap: 4px; white-space: nowrap; }
  `;

  private titlebar() {
    return html`
      <div class="titlebar">
        <div class="qat">
          ${btn("open")}${btn("save", "w24")}${btn("saveas")}${btn("print")}${btn("undo")}${drop("Undo", "w12")}${btn("redo", "w20")}${drop("Redo", "w14")}
          ${btn("sheetset", "w20")}${drop("Sheet set", "w12")}${btn("plot")}${btn("preview", "w24")}${btn("publish")}
          ${combo("ws", "Workspace", "3D Modeling", "gear")}
          <button class="more" aria-label="Customize"><i></i>${tri()}</button>
        </div>
        <h1 class="doc">Drawing1.dwg</h1>
        <div class="info">
          <button class="exp" aria-label="Collapse"><svg viewBox="0 0 5 7"><path d="M0 0l5 3.500L0 7z" fill="#222"/></svg></button>
          <input type="search" aria-label="Search" placeholder="Type a keyword or phrase" />
          ${btn("binoc", "w24")}
          <button class="signin">${ic("user")}<span>Sign In</span></button>
          ${drop("Sign in", "w16")}${btn("exchange", "w24")}${btn("tri")}${drop("Apps", "w12")}
          <span class="sep"></span>${btn("help", "w20")}${drop("Help", "w12")}
        </div>
        <div class="winctl">
          <button aria-label="Minimize"><svg viewBox="0 0 12 12"><path d="M1 6.500h10" stroke="#777"/></svg></button>
          <button aria-label="Maximize"><svg viewBox="0 0 12 12"><path d="M1.500 1.500h9v9h-9z" fill="none" stroke="#777"/></svg></button>
          <button aria-label="Close"><svg viewBox="0 0 12 12"><path d="M1 1l10 10M11 1L1 11" stroke="#777"/></svg></button>
        </div>
      </div>`;
  }

  private ribbon() {
    const row = (names: string[]) => html`${names.map((n) => btn(n))}${drop(names[0])}`;
    return html`
      <div class="ribbon">
        ${panel("Modeling", html`${bigBtn("box", "Box")}${bigBtn("extrude", "Extrude")}${btn("wedge")}${btn("presspull")}`, { menu: true, cls: "modeling" })}
        ${panel("Mesh", html`${bigBtn("smooth", html`Smooth<br />Object`, false)}${btn("meshadd")}${btn("meshsub")}${btn("meshcrease")}`, { launch: true, cls: "mesh" })}
        ${panel("Solid Editing", html`${row(["union", "thicken", "interfere"])}${row(["subtract", "slice", "extractf"])}${row(["intersect", "thick2", "separate"])}`, { menu: true, cls: "solid" })}
        ${panel("Draw", html`${row(["polyline", "polysolid", "arc"])}${row(["spline", "line", "circle"])}${row(["polygon", "rect", "ellipse"])}`, { menu: true, cls: "draw" })}
        ${panel("Modify", html`${row(["align3", "move3", "move", "copy", "trim"])}${row(["align", "rotate3", "rotate", "mirror", "fillet"])}${row(["erase", "scale3", "scale", "offset", "array"])}`, { menu: true, cls: "modify" })}
        ${panel("Coordinates", html`
          ${btn("ucsidea")}${drop("UCS")}${btn("ucsnamed")}${btn("ucsworld")}${btn("ucslist")}${btn("ucsglobe")}
          ${btn("ucsx")}${drop("Rotate UCS")}${btn("ucsprev")}${btn("ucsorigin")}${btn("ucsz")}${btn("ucs3")}
          ${btn("ucsview")}${drop("View UCS")}${combo("", "UCS", "Unnamed", "ucsworld")}`, { launch: true, cls: "coords" })}
        ${panel("View", html`${combo("", "Visual style", "Shades of Gray", "shades")}${combo("", "View", "Unsaved View", "unsaved")}${btn("viewbox")}${drop("Viewport")}`, { menu: true, cls: "views" })}
        ${panel("Selection", html`${bigBtn("culling", "Culling", false, "on")}${bigBtn("filter", "No Filter")}${bigBtn("gizmo", html`Move<br />Gizmo`, true, "side")}`, { cls: "sel" })}
        ${panel("Layers", html`
          ${["lprops", "lcur", "lmatch", "lprev", "liso", "luniso", "lfreeze", "loff"].map((n) => btn(n))}
          <div class="layerrow">${ic("bulb")}${ic("sun")}${ic("unlock")}${ic("swatch")}
            <label class="combo"><select aria-label="Layer"><option>0</option></select>${tri()}</label>
          </div>
          <div class="layertools">${["lstate", "lcopy"].map((n) => html`${btn(n, "w22")}${drop(n, "w14")}`)}</div>`, { menu: true, cls: "layers" })}
        ${panel("Groups", html`${bigBtn("group", "Group", false)}${btn("gedit")}${btn("gadd")}${btn("gsel", "on")}`, { menu: true, cls: "groups" })}
        ${panel("View", bigBtn("base", "Base"), { menu: true, launch: true, cls: "base" })}
        <div class="stub"></div>
      </div>`;
  }

  private scene() {
    return html`
      <svg class="scene" viewBox="21 256 1244 356" preserveAspectRatio="xMidYMin slice" role="img" aria-label="Bearing bracket, southeast isometric">
        <defs>
          <linearGradient id="rim" gradientUnits="userSpaceOnUse" x1="430" y1="430" x2="770" y2="60"><stop offset="0" stop-color="#959595" /><stop offset=".25" stop-color="#adadad"/><stop offset=".5" stop-color="#c0c0c0" /><stop offset=".75" stop-color="#a4a4a4" /><stop offset="1" stop-color="#666" /></linearGradient>
          <linearGradient id="bore" gradientUnits="userSpaceOnUse" x1="780" y1="210" x2="620" y2="430"><stop offset="0" stop-color="#707070" /><stop offset=".4" stop-color="#a8a8a8" /><stop offset=".65" stop-color="#bfbfbf" /><stop offset="1" stop-color="#8c8c8c" /></linearGradient>
          <linearGradient id="pin"><stop offset="0" stop-color="#999" /><stop offset=".35" stop-color="#727272" /><stop offset="1" stop-color="#959595" /></linearGradient>
          <linearGradient id="fil" gradientUnits="userSpaceOnUse" x1="1000" y1="748" x2="1022" y2="786"><stop offset="0" stop-color="#a6a6a6" /><stop offset=".5" stop-color="#7c7c7c" /><stop offset="1" stop-color="#888" /></linearGradient>
        </defs>
        <g transform="translate(440.500 250) scale(.33333)" stroke-linejoin="round" stroke-linecap="round" fill="none" stroke="#fff" stroke-width="3.500">
          <path d="M62 429L448 204 450 400 390 617z" fill="#a6a6a6" stroke="none"/>
          <path d="M395 350L365 354 347 370 341 390 348 410 365 423 390 428" fill="url(#pin)"/>
          <path d="M147 590L240 648 147 703z" fill="#989898" stroke-width="3"/>
          <path d="M48 440L62 430 390 617V395L490 445V673L812 857Q832 868 832 890V1095L732 1040V927L147 590V703L48 648z" fill="#888" stroke="none"/>
          <path d="M490 673L880 450 1205 632 812 857z" fill="#a6a6a6" stroke="none"/>
          <path d="M812 857L1205 632Q1223 642 1223 670L832 890Q832 868 812 857z" fill="url(#fil)" stroke="none"/>
          <path d="M832 890L1223 668V873L832 1095z" fill="#888" stroke="none"/>
          <path d="M390 395L399 332 415 275 450 200 500 125 550 75 612 40 668 28 718 36 850 117 800 140 600 260 500 370 490 445z" fill="url(#rim)" stroke="none"/>
          <path d="M490 673V440L498 380 518 312 555 238 605 178 660 132 715 103 768 87 815 92 850 117 872 160 880 215V450z" fill="#888" stroke="none"/>
          <path d="M597 375L605 330 620 295 650 250 690 213 733 198 768 205 788 235 790 270 780 325 752 380 715 415 675 440 637 448 607 428z" fill="url(#bore)"/>
          <path d="M620 295L650 250 690 213 684 262 672 292 652 315z" fill="#222830" stroke="none"/>
          <path d="M620 295L652 315 635 343 600 372 605 330z" fill="#a6a6a6" stroke="none"/>
          <path d="M690 213Q690 262 668 295T600 372" stroke-width="4.500"/>
          <path d="M48 648V440Q48 432 62 425L448 204M48 648L147 703V590L732 927V1040L832 1093L1223 873V665Q1220 640 1205 632L880 450V215L872 160 850 117 718 36 668 28 612 40 550 75 500 125 450 200 415 275 399 332 391 395V617M490 673V440L498 380 518 312 555 238 605 178 660 132"/>
          <path d="M832 1093V890Q832 868 812 857L490 673M66 430L390 615" stroke="#eee" stroke-width="3"/>
          <path d="M660 132L715 103 768 87 800 89" stroke-dasharray="22 6" stroke-width="3"/>
          <path d="M75 432L440 220M490 670L880 450M812 857L1205 632M240 648L147 703" stroke-dasharray="5 4" stroke-width="2.500"/>
          <path d="M395 396L490 445M840 888L1223 670" stroke-dasharray="10 7" stroke-width="3" stroke-linecap="butt"/>
          <ellipse cx="886" cy="665" rx="67" ry="41" fill="url(#pin)"/>
        </g>
        <g stroke-linecap="round" stroke-width="4">
          <path d="M196 463L228 446" stroke="#b82828"/><path d="M196 463L228 481" stroke="#2d6fe8"/><path d="M195 462V428" stroke="#0d7a12"/>
          <circle cx="195" cy="427" r="1.800" fill="#8fe08f"/>
        </g>
        <g font-size="17" font-family="Lato, sans-serif" font-weight="300"><text x="195" y="422" fill="#35a03f">Y</text><text x="226" y="440" fill="#c93434">X</text><text x="226" y="479" fill="#2d6fe8">Z</text></g>
        <ellipse cx="1213.500" cy="323" rx="35.500" ry="22" fill="none" stroke="#454b54" stroke-width="8"/>
        <g stroke="#85888d" stroke-width=".8" stroke-linejoin="round"><path d="M1191.500 295L1213.500 283.500 1235.500 295 1214 306z" fill="#b9bbbd"/><path d="M1191.500 295L1214 306V332L1193 319z" fill="#adafb2"/><path d="M1235.500 295L1214 306V332L1234 319z" fill="#a0a3a7"/></g>
        <g font-family="Open Sans, sans-serif" font-weight="700" fill="#3a3d42" font-size="6" text-anchor="middle"><text transform="translate(1213 294) rotate(152)">BACK</text><text transform="translate(1202 313) rotate(90)" y="2">LEFT</text><text transform="translate(1225 315) rotate(-28)">TOP</text></g>
        <g font-family="Open Sans, sans-serif" font-weight="700" fill="#a9acb0" font-size="13" text-anchor="middle"><text transform="translate(1184 338) rotate(30)" y="5">S</text><text transform="translate(1242 338) rotate(30)" y="5">E</text><text transform="translate(1188 305) rotate(30)" y="3" font-size="8">W</text><text transform="translate(1239 305) rotate(30)" y="3" font-size="8">N</text></g>
      </svg>`;
  }

  private child() {
    return html`
      <div class="mdi"><section class="child">
        <header class="ctitle">
          <svg class="i20" viewBox="0 0 20 20"><path d="M4 3h8l3 3v9H4z" fill="#2c5a8c"/><path d="M2 9l6 1 3 4 5-1v4H2z" fill="#f5c518" stroke="#b98c10" stroke-width=".6"/><path d="M5 2v6M2 5h6M3 3l4 4M7 3L3 7" stroke="#fff"/></svg>
          <h2>Drawing1.dwg</h2>
          <div class="ctl">
            <button aria-label="Minimize drawing"><svg viewBox="0 0 14 12"><path d="M2 6h10v3.500H2z" fill="#fff" stroke="#555"/></svg></button>
            <button aria-label="Restore drawing"><svg viewBox="0 0 14 12"><path d="M2.500 2h9v8h-9zM5.500 5h3v2h-3z" fill="#fff" stroke="#444" stroke-width="1.300"/></svg></button>
            <button aria-label="Close drawing"><svg viewBox="0 0 14 12"><path d="M2 2h3l2 2 2-2h3L9 6l3 4H9L7 8l-2 2H2l3-4z" fill="#fff" stroke="#444"/></svg></button>
          </div>
        </header>
        <div class="canvas">
          ${this.scene()}
          <span class="vlabel">[−][SE Isometric][Shades of Gray]</span>
          <button class="ucsname">Unnamed ${tri()}</button>
          <div class="nav" role="toolbar" aria-label="Navigation">
            <svg viewBox="0 0 29 197" fill="none" stroke="#3c4149"><circle cx="24" cy="5" r="3"/><path d="M14.500 18h9.500v10a9.500 9.500 0 1 1-9.500-10z"/><circle cx="14.500" cy="28" r="5"/><path d="M13 46h4l-2 2z" fill="#3c4149"/>
              <path d="M9 74q-5-5-5-8l4 3-1-9q2-1 3 5V58q2-1 2.500 5V57q3-1 3 6l1-5q3 0 1 7 2-4 4-4-1 8-5 12-4 3-7.500 1z"/>
              <path d="M4 83l15 15M19 83L4 98M4 87v-4h4M15 83h4v4M4 94v4h4"/><circle cx="19" cy="98" r="4.500"/><path d="M22 101l3 3" stroke-width="2"/><path d="M13 111h4l-2 2z" fill="#3c4149"/>
              <path d="M13 139v-14h-3l4.500-6 4.500 6h-3v14zM4 132q0-4 10-4t10 4-10 4l-4 0M7 133l-3-3"/><path d="M13 146h4l-2 2z" fill="#3c4149"/><path d="M1 153h27" stroke="#4c5159"/>
              <path d="M4 158h5v5H4zM12 158h5v5h-5zM19 158h5v5h-5zM4 167h15v12H4z"/><path d="M9 170v6l5-3z" fill="#3c4149"/><circle cx="24" cy="192" r="3"/></svg>
          </div>
        </div>
      </section></div>`;
  }

  render() {
    return html`
      <main class="desktop">
        <div class="left">A</div>
        <div class="app">
          <div class="header">
            <button class="appbtn" aria-label="Application menu"><svg class="logo" viewBox="0 0 26 34"><path d="M11 3h5l9 20-6-2-6-5-8 7H2z" fill="#c5161d"/><path d="M11 3l2 13-8 7H2z" fill="#8e0f14"/><path d="M16 3l-3 13 6 5z" fill="#e23a3a"/><text x="16" y="33" font-size="8" font-weight="700" text-anchor="middle" fill="#111">M</text></svg>${tri()}</button>
            ${this.titlebar()}
            <nav class="tabs">${TABS.map((t, i) => html`<button class="tab ${i ? "" : "sel"}">${t}</button>`)}<button class="pill" aria-label="Minimize ribbon">${tri()}</button>${tri()}</nav>
          </div>
          ${this.ribbon()}
          ${this.child()}
          <div class="bottom">
            <nav class="sheets"><button class="cur">Model</button><button>Layout1</button><button>Layout2</button><button class="add">+</button></nav>
            <div class="status"><button class="model">MODEL</button>${status(STATUS_A)}<button class="ws2">3D Modeling${tri()}</button>${status(STATUS_B)}</div>
          </div>
        </div>
        <div class="right"></div>
      </main>`;
  }
}
